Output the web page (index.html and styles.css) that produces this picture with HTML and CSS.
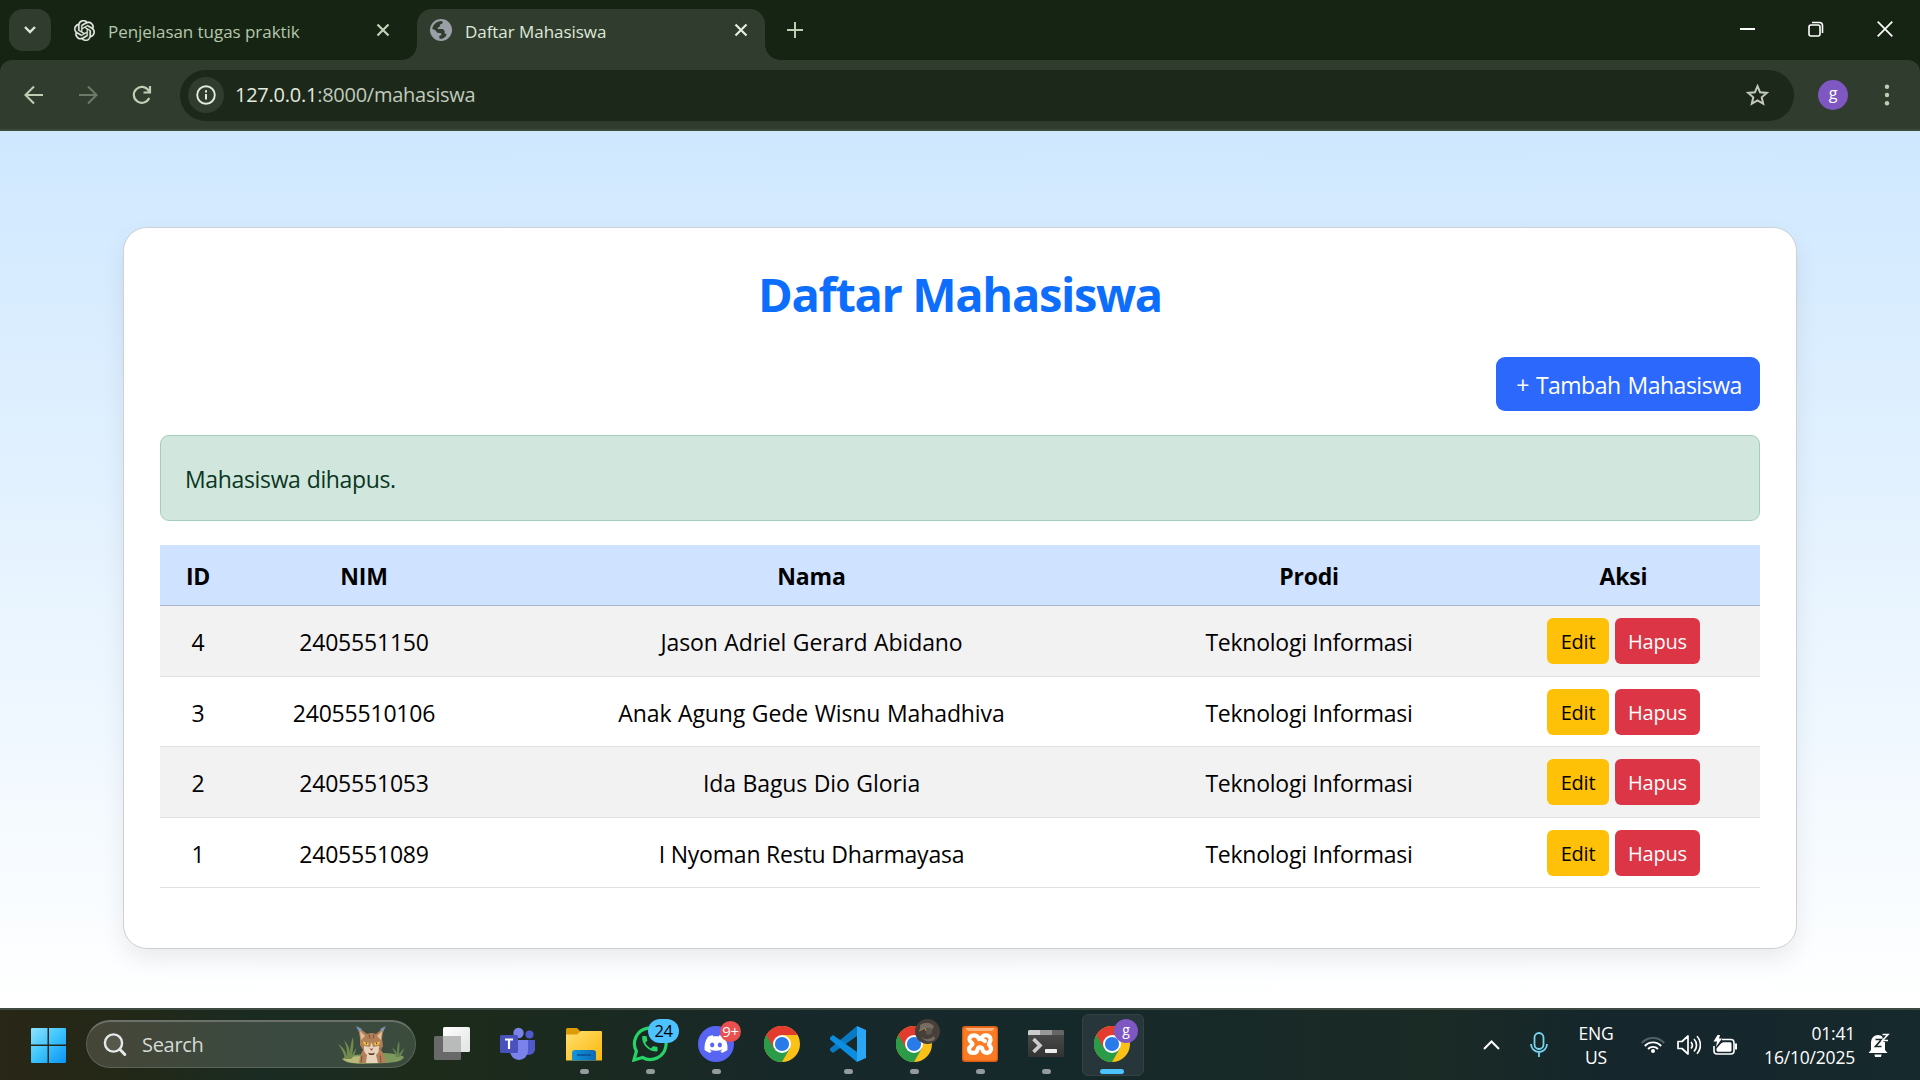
FILE: index.html
```html
<!DOCTYPE html>
<html lang="id">
<head>
<meta charset="utf-8">
<title>Daftar Mahasiswa</title>
<link rel="stylesheet" href="styles.css">
</head>
<body>
<svg class="defs" width="0" height="0" aria-hidden="true">
  <defs>
    <linearGradient id="win" x1="0" y1="0" x2="1" y2="1"><stop offset="0" stop-color="#8fe3ff"/><stop offset=".5" stop-color="#3cc3fc"/><stop offset="1" stop-color="#0a93f5"/></linearGradient>
    <linearGradient id="folder" x1="0" y1="0" x2="1" y2="1"><stop offset="0" stop-color="#ffe070"/><stop offset="1" stop-color="#fbb70a"/></linearGradient>
    <linearGradient id="blue" x1="0" y1="0" x2="1" y2="0"><stop offset="0" stop-color="#1296dd"/><stop offset="1" stop-color="#0d69b8"/></linearGradient>
    <linearGradient id="dark" x1="0" y1="0" x2="0" y2="1"><stop offset="0" stop-color="#4e4e4e"/><stop offset="1" stop-color="#333"/></linearGradient>
    <linearGradient id="light" x1="0" y1="0" x2="1" y2="1"><stop offset="0" stop-color="#fff"/><stop offset="1" stop-color="#e2e2e2"/></linearGradient>
    <symbol id="chrome" viewBox="0 0 36 36">
      <circle cx="18" cy="18" r="18" fill="#fbc116"/>
      <path d="M2.41 9A18 18 0 0 0 18 36l7.8-13.5L18 18z" fill="#2a9b48"/>
      <path d="M2.41 9A18 18 0 0 1 33.59 9H18l-7.8 13.5z" fill="#e33b2e"/>
      <circle cx="18" cy="18" r="9" fill="#fff"/>
      <circle cx="18" cy="18" r="7.1" fill="#2a7bea"/>
    </symbol>
  </defs>
</svg>

<header class="tabstrip">
  <button class="tab-search" aria-label="Search tabs"><svg width="14" height="10" viewBox="0 0 14 10"><path d="M2 2l5 5 5-5" fill="none" stroke="#dde8d5" stroke-width="2.4"/></svg></button>
  <div class="tab">
    <svg width="21" height="21" viewBox="0 0 24 24"><path fill="#e9eee6" stroke="#e9eee6" stroke-width=".4" d="M22.2819 9.8211a5.9847 5.9847 0 0 0-.5157-4.9108 6.0462 6.0462 0 0 0-6.5098-2.9A6.0651 6.0651 0 0 0 4.9807 4.1818a5.9847 5.9847 0 0 0-3.9977 2.9 6.0462 6.0462 0 0 0 .7427 7.0966 5.98 5.98 0 0 0 .511 4.9107 6.051 6.051 0 0 0 6.5146 2.9001A5.9847 5.9847 0 0 0 13.2599 24a6.0557 6.0557 0 0 0 5.7718-4.2058 5.9894 5.9894 0 0 0 3.9977-2.9001 6.0557 6.0557 0 0 0-.7475-7.0729zm-9.022 12.6081a4.4755 4.4755 0 0 1-2.8764-1.0408l.1419-.0804 4.7783-2.7582a.7948.7948 0 0 0 .3927-.6813v-6.7369l2.02 1.1686a.071.071 0 0 1 .038.052v5.5826a4.504 4.504 0 0 1-4.4945 4.4944zm-9.6607-4.1254a4.4708 4.4708 0 0 1-.5346-3.0137l.142.0852 4.783 2.7582a.7712.7712 0 0 0 .7806 0l5.8428-3.3685v2.3324a.0804.0804 0 0 1-.0332.0615L9.74 19.9502a4.4992 4.4992 0 0 1-6.1408-1.6464zM2.3408 7.8956a4.485 4.485 0 0 1 2.3655-1.9728V11.6a.7664.7664 0 0 0 .3879.6765l5.8144 3.3543-2.0201 1.1685a.0757.0757 0 0 1-.071 0l-4.8303-2.7865A4.504 4.504 0 0 1 2.3408 7.872zm16.5963 3.8558L13.1038 8.364 15.1192 7.2a.0757.0757 0 0 1 .071 0l4.8303 2.7913a4.4944 4.4944 0 0 1-.6765 8.1042v-5.6772a.79.79 0 0 0-.407-.667zm2.0107-3.0231l-.142-.0852-4.7735-2.7818a.7759.7759 0 0 0-.7854 0L9.409 9.2297V6.8974a.0662.0662 0 0 1 .0284-.0615l4.8303-2.7866a4.4992 4.4992 0 0 1 6.6802 4.66zM8.3065 12.863l-2.02-1.1638a.0804.0804 0 0 1-.038-.0567V6.0742a4.4992 4.4992 0 0 1 7.3757-3.4537l-.142.0805L8.704 5.459a.7948.7948 0 0 0-.3927.6813zm1.0976-2.3654l2.602-1.4998 2.6069 1.4998v2.9994l-2.5974 1.4997-2.6067-1.4997Z"/></svg>
    <span class="tab-title">Penjelasan tugas praktik</span>
    <svg class="tab-close" width="14" height="14" viewBox="0 0 14 14"><path d="M1.5 1.5l11 11m0-11l-11 11" stroke="#c3d3ba" stroke-width="2.2"/></svg>
  </div>
  <div class="tab tab-active">
    <svg width="22" height="22" viewBox="0 0 24 24"><circle cx="12" cy="12" r="12" fill="#9aa0a6"/><path fill="#303c2d" d="M2.5 11C3 6.500 7 2.600 12.500 2.300L14 3.300 13.500 5 11 6 11 8 8.500 9.500 8.500 11 14 11 16 13 16 16 18 16 17.500 18.500C15.500 21 13 21.600 10.500 21.500L10 18.500 12.500 17.500 12 15.500 8 15 5.500 12Z"/></svg>
    <span class="tab-title">Daftar Mahasiswa</span>
    <svg class="tab-close" width="14" height="14" viewBox="0 0 14 14"><path d="M1.500 1.500l11 11m0-11l-11 11" stroke="#e6eee1" stroke-width="2.200"/></svg>
  </div>
  <svg class="new-tab" width="16" height="16" viewBox="0 0 16 16"><path d="M8 0v16M0 8h16" stroke="#bccdb3" stroke-width="2"/></svg>
  <div class="window-controls">
    <svg width="15" height="16" viewBox="0 0 15 16"><path d="M0 8h15" stroke="#fff" stroke-width="2"/></svg>
    <svg width="16" height="16" viewBox="0 0 16 16" fill="none" stroke="#fff" stroke-width="1.600"><rect x="1" y="4" width="11" height="11" rx="2"/><path d="M4 1.500h7.500a3 3 0 0 1 3 3V12"/></svg>
    <svg width="16" height="16" viewBox="0 0 16 16"><path d="M.7.7l14.600 14.600m0-14.600L.7 15.300" stroke="#fff" stroke-width="1.700"/></svg>
  </div>
</header>

<nav class="toolbar">
  <svg width="20" height="20" viewBox="0 0 20 20" fill="none" stroke="#bdcfb3" stroke-width="2.100"><path d="M19 10H2.500M10 1.500L1.500 10l8.500 8.500"/></svg>
  <svg width="20" height="20" viewBox="0 0 20 20" fill="none" stroke="#6d7969" stroke-width="2.100"><path d="M1 10h16.500M10 1.500l8.500 8.500-8.500 8.500"/></svg>
  <svg width="20" height="20" viewBox="0 0 20 20" fill="none" stroke="#bdcfb3" stroke-width="2.200"><path d="M17.200 13A8 8 0 1 1 16.500 5.400L18 7.300M18 1v6.500h-6.500"/></svg>
  <div class="omnibox">
    <span class="site-info"><svg width="20" height="20" viewBox="0 0 20 20"><circle cx="10" cy="10" r="8.800" fill="none" stroke="#e2eadd" stroke-width="1.900"/><path d="M10 9v5.500M10 5.300v2.200" stroke="#e2eadd" stroke-width="2"/></svg></span>
    <span class="url"><b>127.0.0.1</b>:8000/mahasiswa</span>
    <svg class="star" width="23" height="22" viewBox="0 0 23 22"><path d="M11.500 2.200l2.600 6.100 6.700.6-5.100 4.400 1.500 6.500-5.700-3.400-5.700 3.400 1.500-6.500L2.200 8.900l6.700-.6z" fill="none" stroke="#c5cac0" stroke-width="2"/></svg>
  </div>
  <span class="profile">g</span>
  <svg class="menu" width="6" height="24" viewBox="0 0 6 24" fill="#bdcfb3"><circle cx="3" cy="3.700" r="2.200"/><circle cx="3" cy="12" r="2.200"/><circle cx="3" cy="20.200" r="2.200"/></svg>
</nav>

<main class="page">
  <section class="card">
    <h1 class="title">Daftar Mahasiswa</h1>
    <div class="actions"><a class="btn-add">+ Tambah Mahasiswa</a></div>
    <div class="alert">Mahasiswa dihapus.</div>
    <table class="students">
      <colgroup><col class="c-id"><col class="c-nim"><col class="c-nama"><col class="c-prodi"><col class="c-aksi"></colgroup>
      <thead><tr><th>ID</th><th>NIM</th><th>Nama</th><th>Prodi</th><th>Aksi</th></tr></thead>
      <tbody>
        <tr class="tall"><td>4</td><td>2405551150</td><td class="name">Jason Adriel Gerard Abidano</td><td class="prodi">Teknologi Informasi</td><td><div class="btns"><a class="btn edit">Edit</a><a class="btn del">Hapus</a></div></td></tr>
        <tr><td>3</td><td>24055510106</td><td class="name">Anak Agung Gede Wisnu Mahadhiva</td><td class="prodi">Teknologi Informasi</td><td><div class="btns"><a class="btn edit">Edit</a><a class="btn del">Hapus</a></div></td></tr>
        <tr class="tall"><td>2</td><td>2405551053</td><td class="name">Ida Bagus Dio Gloria</td><td class="prodi">Teknologi Informasi</td><td><div class="btns"><a class="btn edit">Edit</a><a class="btn del">Hapus</a></div></td></tr>
        <tr><td>1</td><td>2405551089</td><td>I Nyoman Restu Dharmayasa</td><td class="prodi">Teknologi Informasi</td><td><div class="btns"><a class="btn edit">Edit</a><a class="btn del">Hapus</a></div></td></tr>
      </tbody>
    </table>
  </section>
</main>

<footer class="taskbar">
  <svg class="start" width="35" height="35" viewBox="0 0 35 35" fill="url(#win)"><path d="M1 0h15.500v16.500H0V1a1 1 0 0 1 1-1zM18 0h16a1 1 0 0 1 1 1v15.500H18zM0 18h16.500v17H1a1 1 0 0 1-1-1zM18 18h17v16a1 1 0 0 1-1 1H18z"/></svg>
  <div class="search">
    <svg width="24" height="24" viewBox="0 0 24 24" fill="none" stroke="#e6e9ea" stroke-linecap="round"><circle cx="10.500" cy="10" r="8.600" stroke-width="2.400" fill="#ffffff18"/><path d="M17 16.500l4.800 5" stroke-width="3"/></svg>
    <span class="search-text">Search</span>
    <svg class="lynx" width="68" height="38" viewBox="0 0 68 38">
      <path d="M4 33c6-5 17-4 24-5 14-2 32-1 38 3-2 6-16 6-29 6.500C20 38 8 38 4 33z" fill="#7d9a5c"/>
      <path d="M5 33c7-3 20-4 27-1l-2 5C18 38 9 37 5 33z" fill="#b9b97c"/>
      <path d="M7 33C6 27 3 22 0 18c5 3 8 7 9 12 0-7-1-11-3-16 4 4 6 9 6 14 0-6 1-12 3-17 1 7 0 13-1 18l4-7c0 5-3 9-5 11z" fill="#718b4c"/>
      <path d="M58 31c-1-4-2-6-4-9 3 1 4 3 5 6 0-5 0-9 2-13 1 5 0 9 0 13l5-6c-1 5-3 8-5 9z" fill="#668453"/>
      <path d="M22 12L20 1l9 7q5-2 9 0l8-7-2 11 1 8-2 4q4 5 5 13H21q1-9 4-13l-3-5z" fill="#b28058"/>
      <path d="M18 0l6 3-3 3zm30 0l-6 3 3 3z" fill="#7b95b3"/>
      <path d="M22 5l5 5-4 4zM44 5l-5 5 4 4z" fill="#e3bd95"/>
      <path d="M26 20l6 1 1.500-5 1.500 5 6-1q1 6-3 9l2 8H28l1-8q-4-3-3-9z" fill="#e8d3bd"/>
      <path d="M25 15.500l6 1.500-1 2.500-4-1zm17 0l-6 1.500 1 2.500 4-1z" fill="#f4c344"/><path d="M27.500 16.500l1.500.3-.5 2zM39.500 16.500l-1.500.3.500 2z" fill="#362a20"/>
      <path d="M31.500 22.500h4l-2 2.500z" fill="#b0604e"/><path d="M30 26.500q3.500 2 7 0l-1.500 2.500h-4z" fill="#5a352a"/>
      <path d="M31 8.500l1 4m4-4l-1 4m-12 9l2 2m18-2l-2 2m-17 6l-1 7m19-7l1 7" stroke="#77533a" stroke-width="1"/>
    </svg>
  </div>
  <ul class="apps">
    <li class="app"><svg width="36" height="36" viewBox="0 0 36 36"><rect y="10" width="27" height="24" rx="1.500" fill="#686968"/><rect x="9" y="1" width="27" height="25" rx="1.500" fill="url(#light)"/><path d="M9 10h18v16H9z" fill="#b9baba"/></svg></li>
    <li class="app"><svg width="36" height="36" viewBox="0 0 36 36"><circle cx="29.500" cy="8.500" r="4" fill="#5059c9"/><path d="M26 14h9v10a6 6 0 0 1-9 4z" fill="#5059c9"/><circle cx="18.500" cy="7" r="5.200" fill="#7b83eb"/><path d="M10 14h18v11a9 9 0 0 1-18 0z" fill="#7b83eb"/><rect y="9" width="18" height="18" rx="1.500" fill="#4951bd"/><path d="M5 13.500h8M9 13.500V23" stroke="#fff" stroke-width="2.200"/></svg></li>
    <li class="app run"><svg width="36" height="36" viewBox="0 0 36 36"><path d="M0 3.500A1.500 1.500 0 0 1 1.500 2H11l4 4-4 4H0z" fill="#dd9b08"/><path d="M0 8.500h11L15 5h20a1 1 0 0 1 1 1v28.500H0z" fill="url(#folder)"/><path d="M6 34.500V27a3 3 0 0 1 3-3h18a3 3 0 0 1 3 3v7.500z" fill="url(#blue)"/><path d="M11 29h14" stroke="#0a4f8f" stroke-width="1.500"/></svg></li>
    <li class="app run"><svg width="36" height="36" viewBox="0 0 36 36"><path d="M2 34l2.400-8.700A15.800 15.800 0 1 1 10.500 31.500z" fill="none" stroke="#25d366" stroke-width="3.200"/><g transform="translate(7.500 7.500) scale(.86)"><path fill="#25d366" d="M6.620 10.790c1.440 2.830 3.760 5.140 6.590 6.590l2.200-2.200c.27-.27.67-.36 1.020-.24 1.120.37 2.330.57 3.570.57.55 0 1 .45 1 1V20c0 .55-.45 1-1 1-9.390 0-17-7.610-17-17 0-.55.450-1 1-1h3.500c.55 0 1 .45 1 1 0 1.250.2 2.450.57 3.570.11.35.03.74-.25 1.020z"/></g></svg><span class="badge wa">24</span></li>
    <li class="app run"><svg width="36" height="36" viewBox="0 0 36 36"><circle cx="18" cy="18" r="18" fill="#5865f2"/><g transform="translate(6.500 6.500) scale(.96)"><path fill="#fff" d="M20.317 4.3698a19.7913 19.7913 0 00-4.8851-1.5152.0741.0741 0 00-.0785.0371c-.211.3753-.4447.8648-.6083 1.2495-1.8447-.2762-3.68-.2762-5.4868 0-.1636-.3933-.4058-.8742-.6177-1.2495a.077.077 0 00-.0785-.037 19.7363 19.7363 0 00-4.8852 1.515.0699.0699 0 00-.0321.0277C.5334 9.0458-.319 13.5799.0992 18.0578a.0824.0824 0 00.0312.0561c2.0528 1.5076 4.0413 2.4228 5.9929 3.0294a.0777.0777 0 00.0842-.0276c.4616-.6304.8731-1.2952 1.226-1.9942a.076.076 0 00-.0416-.1057c-.6528-.2476-1.2743-.5495-1.8722-.8923a.077.077 0 01-.0076-.1277c.1258-.0943.2517-.1923.3718-.2914a.0743.0743 0 01.0776-.0105c3.9278 1.7933 8.18 1.7933 12.0614 0a.0739.0739 0 01.0785.0095c.1202.099.246.1981.3728.2924a.077.077 0 01-.0066.1276 12.2986 12.2986 0 01-1.873.8914.0766.0766 0 00-.0407.1067c.3604.698.7719 1.3628 1.225 1.9932a.076.076 0 00.0842.0286c1.961-.6067 3.9495-1.5219 6.0023-3.0294a.077.077 0 00.0313-.0552c.5004-5.177-.8382-9.6739-3.5485-13.6604a.061.061 0 00-.0312-.0286zM8.02 15.3312c-1.1825 0-2.1569-1.0857-2.1569-2.419 0-1.3332.9555-2.4189 2.157-2.4189 1.2108 0 2.1757 1.0952 2.1568 2.419 0 1.3332-.9555 2.4189-2.1569 2.4189zm7.9748 0c-1.1825 0-2.1569-1.0857-2.1569-2.419 0-1.3332.9554-2.4189 2.1569-2.4189 1.2108 0 2.1757 1.0952 2.1568 2.419 0 1.3332-.946 2.4189-2.1568 2.4189Z"/></g></svg><span class="badge dc">9+</span></li>
    <li class="app"><svg width="36" height="36"><use href="#chrome"/></svg></li>
    <li class="app run"><svg width="36" height="36" viewBox="0 0 36 36"><path d="M27 0L0 22.500v2L3 27 27 10z" fill="#0b78c2"/><path d="M3 9L0 11.500v2L27 36V26z" fill="#0c8de0"/><path d="M27 0l9 4v28l-9 4z" fill="#2aa6f5"/></svg></li>
    <li class="app run"><svg width="36" height="36"><use href="#chrome"/></svg><span class="badge photo"><svg width="25" height="25" viewBox="0 0 25 25"><circle cx="12.500" cy="12.500" r="12.500" fill="#463f3a"/><path d="M5 6q8-5 14 1l-2 4q-6-4-12 0zM6 18q7 5 13-1l1 3q-7 6-14-2z" fill="#766c62"/><path d="M11 9q7-1 6 5-3 3-6 1z" fill="#5e554d"/><path d="M4 12l6-3 1 3" fill="none" stroke="#b08a5c"/></svg></span></li>
    <li class="app run"><svg width="36" height="36" viewBox="0 0 36 36"><rect width="36" height="36" rx="3" fill="#d85f14"/><rect x="1.200" y="1.500" width="33.600" height="33" rx="2.500" fill="#fb7a24"/><path d="M4 2h28q0 3-4 3H8Q4 5 4 2z" fill="#fdb37e"/><path d="M17 13C16 8 7 8 7.500 13.500C8 17 10.500 16 10.500 18C10.500 20 7 20 7 23.500C7.500 28 15 28 15.500 23.500C16 20.500 20 20.500 20.500 23.500C21 28 29 28 29 23C29 20 27 19.500 27 18C27 16.500 29 16 28.500 13C28 8 19.500 8 19.500 13L23 15" fill="none" stroke="#fff" stroke-width="4.200" stroke-linejoin="round" stroke-linecap="round"/></svg></li>
    <li class="app run"><svg width="36" height="36" viewBox="0 0 36 36"><rect y="4" width="36" height="27" rx="1.500" fill="url(#dark)"/><path d="M0 9V5.500A1.500 1.500 0 0 1 1.500 4H12v5z" fill="#ccc"/><path d="M12 4h12v5H12z" fill="#999"/><path d="M24 4h10.500A1.500 1.500 0 0 1 36 5.500V9H24z" fill="#666"/><path d="M5.500 13l6.500 6.500-6.500 6.500" fill="none" stroke="#ccc" stroke-width="3.600"/><rect x="17" y="23" width="12" height="4" rx=".8" fill="#eee"/></svg></li>
    <li class="app run current"><svg width="36" height="36"><use href="#chrome"/></svg><span class="badge user">g</span></li>
  </ul>
  <div class="tray">
    <svg class="up" width="17" height="10" viewBox="0 0 17 10"><path d="M1 9l7.500-7.500L16 9" fill="none" stroke="#fff" stroke-width="2"/></svg>
    <svg class="mic" width="18" height="25" viewBox="0 0 18 25" fill="none" stroke="#76d5f2" stroke-width="1.800"><rect x="4.500" y="1" width="9" height="16" rx="4.500"/><path d="M1 12a8 8 0 0 0 16 0M9 20v5"/></svg>
    <div class="lang"><span>ENG</span><span>US</span></div>
    <svg class="wifi" width="24" height="18" viewBox="0 0 24 18" fill="none" stroke="#fff" stroke-width="1.900"><path d="M.8 7a15 15 0 0 1 22.400 0" stroke="#536165"/><path d="M3.800 10a11 11 0 0 1 16.400 0M7 13a7 7 0 0 1 10 0"/><circle cx="12" cy="15" r="2" fill="#fff" stroke="none"/></svg>
    <svg class="vol" width="24" height="20" viewBox="0 0 24 20" fill="none" stroke="#fff" stroke-width="1.700"><path d="M1 6.500h4L11 1v18l-6-5.500H1z" stroke-linejoin="round"/><path d="M14 7a5 5 0 0 1 0 6.500M17 4a9 9 0 0 1 0 12.500M20 1.300a13 13 0 0 1 0 17.500"/></svg>
    <svg class="bat" width="24" height="20" viewBox="0 0 24 20"><path d="M9 4.500h9a3 3 0 0 1 3 3V16a3 3 0 0 1-3 3H4a3 3 0 0 1-3-3v-5" fill="none" stroke="#fff" stroke-width="1.600"/><path d="M10 7.200h7.500l1 1v7.600l-1 1H4.500l-1-1v-2.300L8 8.500zM22 8.500H24v6h-2zM4.500 0H7L6 3.500h3L3 12l1-5.500H.5z" fill="#fff"/></svg>
    <div class="clock"><span>01:41</span><span>16/10/2025</span></div>
    <svg class="bell" width="22" height="24" viewBox="0 0 22 24"><path d="M3 17V9a7 7 0 0 1 14 0v8l2.500 3H.5zM6.500 21.500h7a3.500 3.500 0 0 1-7 0z" fill="#fff"/><path d="M7.500 6.500h6l-6 7h6" fill="none" stroke="#16282b" stroke-width="1.700"/><path d="M13.500 0H22v9h-6.500z" fill="#16282b"/><path d="M14.500 1.500h5.500l-5.500 6h5.500" fill="none" stroke="#fff" stroke-width="1.600"/></svg>
  </div>
</footer>
</body>
</html>
```

FILE: styles.css
```css
* { box-sizing: border-box; }

body {
  margin: 0;
  width: 1920px;
  height: 1080px;
  overflow: hidden;
  display: flex;
  flex-direction: column;
  font-family: "Open Sans", "Noto Sans", sans-serif;
  background: #162413;
}

svg { display: block; flex: none; }
.defs { position: absolute; }

/* Tab strip */
.tabstrip {
  height: 60px;
  flex: none;
  display: flex;
  align-items: flex-start;
  padding: 9px 27px 0 9px;
}
.tab-search {
  width: 42px;
  height: 42px;
  padding: 0;
  border: 0;
  border-radius: 14px;
  background: #303c2d;
  display: flex;
  align-items: center;
  justify-content: center;
}
.tab {
  display: flex;
  align-items: center;
  height: 51px;
  width: 342px;
  margin-left: 9px;
  padding: 0 12px 9px 14px;
  color: #b5c6ac;
}
.tab-title {
  flex: 1;
  margin-left: 13px;
  padding-top: 3px;
  font-size: 17px;
  line-height: 24px;
  letter-spacing: -0.05px;
  white-space: nowrap;
}
.tab-active {
  position: relative;
  width: 348px;
  margin-left: 15px;
  padding: 0 17px 9px 13px;
  border-radius: 15px 15px 0 0;
  background: #303c2d;
  color: #dfe9d9;
}
.tab-active::before,
.tab-active::after {
  content: "";
  position: absolute;
  bottom: 0;
  width: 15px;
  height: 15px;
}
.tab-active::before { left: -15px; background: radial-gradient(circle at 0 0, transparent 14.5px, #303c2d 15px); }
.tab-active::after { right: -15px; background: radial-gradient(circle at 100% 0, transparent 14.5px, #303c2d 15px); }
.new-tab { margin: 13px 0 0 22px; }
.window-controls {
  margin: 12px 0 0 auto;
  display: flex;
  gap: 53px;
}

/* Toolbar */
.toolbar {
  height: 71px;
  flex: none;
  display: flex;
  align-items: center;
  padding: 1px 29px 0 24px;
  gap: 34px;
  background: #303c2d;
  border-bottom: 2px solid #3c4939;
  border-radius: 12px 12px 0 0;
}
.omnibox {
  display: flex;
  align-items: center;
  width: 1614px;
  height: 51px;
  margin-left: -6px;
  padding: 0 25px 0 8px;
  border-radius: 26px;
  background: #1c281a;
}
.site-info {
  width: 36px;
  height: 36px;
  border-radius: 50%;
  background: #303c2d;
  display: flex;
  align-items: center;
  justify-content: center;
}
.url {
  flex: 1;
  margin-left: 11px;
  font-size: 20px;
  line-height: 28px;
  letter-spacing: -0.25px;
  color: #c2cabd;
}
.url b { font-weight: 400; color: #e4eade; }
.profile {
  width: 30px;
  height: 30px;
  margin-left: -10px;
  border-radius: 50%;
  background: #7e57c2;
  color: #fff;
  font-size: 16px;
  line-height: 27px;
  text-align: center;
}
.menu { margin-left: 2px; }

/* Page */
.page {
  height: 877px;
  flex: none;
  padding: 96px 123px 0;
  background: linear-gradient(180deg, #cfe8ff 0%, #ffffff 100%);
}
.card {
  height: 722px;
  padding: 36px 36px 0;
  border: 1px solid #cdd1d4;
  border-radius: 24px;
  background: #fff;
  box-shadow: 0 10px 24px rgba(0, 0, 0, 0.08);
}
.title {
  margin: 0;
  height: 93px;
  font-size: 47px;
  line-height: 60px;
  letter-spacing: -1.35px;
  text-align: center;
  color: #0d6efd;
}
.actions {
  display: flex;
  justify-content: flex-end;
}
.btn-add {
  width: 264px;
  height: 54px;
  padding-left: 2px;
  border-radius: 9px;
  background: #2b68fb;
  color: #fff;
  font-size: 23px;
  line-height: 57px;
  letter-spacing: -0.5px;
  word-spacing: 1.5px;
  text-align: center;
}
.alert {
  height: 86px;
  margin: 24px 0;
  padding: 0 24px;
  border: 1px solid #a3cfbb;
  border-radius: 9px;
  background: #d1e7dd;
  color: #0a3622;
  font-size: 23px;
  line-height: 87px;
  letter-spacing: -0.35px;
  word-spacing: 0.5px;
}

.students {
  width: 100%;
  table-layout: fixed;
  border-collapse: separate;
  border-spacing: 0;
  font-size: 23px;
  line-height: 34px;
  letter-spacing: -0.2px;
  text-align: center;
  color: #000;
}
.c-id { width: 76px; }
.c-nim { width: 256px; }
.c-nama { width: 639px; }
.c-prodi { width: 356px; }
.c-aksi { width: 273px; }
.students th {
  height: 61px;
  padding: 2px 0 0;
  background: #cfe2ff;
  border-bottom: 1px solid #a6b5cc;
}
.students td {
  height: 70px;
  padding: 3px 0 0;
  border-bottom: 1px solid #dee2e6;
}
.students .tall td { height: 71px; padding-top: 1px; background: #f2f2f2; }
.students .name { letter-spacing: -0.1px; word-spacing: 0.7px; }
.students .prodi { letter-spacing: -0.25px; }
.students td:last-child { padding: 0; }
.btns { display: flex; justify-content: center; gap: 6px; }
.btn {
  height: 46px;
  border-radius: 6px;
  font-size: 20px;
  line-height: 47px;
  letter-spacing: -0.2px;
}
.edit { width: 62px; background: #ffc107; color: #000; }
.del { width: 85px; background: #dc3545; color: #fff; }

/* Taskbar */
.taskbar {
  height: 72px;
  flex: none;
  display: flex;
  align-items: center;
  padding: 0 30px 1px 31px;
  border-top: 2px solid #3e4a42;
  background: linear-gradient(90deg, #292717 0%, #222817 7%, #1a2b23 14%, #1d2b1a 22%, #1b2a20 30%, #17282a 42%, #16292a 55%, #1a2a25 75%, #15262c 84%, #16292c 100%);
  color: #fff;
}
.start { margin-top: 1px; }
.search {
  display: flex;
  align-items: center;
  width: 330px;
  height: 48px;
  margin: -1px 0 0 20px;
  padding: 0 9px 0 16px;
  border: 1px solid #5a6358;
  border-top: 2px solid #6b716a;
  border-radius: 24px;
  background: linear-gradient(90deg, #464637, #3a4a41 60%, #3b4b3c);
}
.search-text {
  flex: 1;
  margin-left: 15px;
  font-size: 20px;
  line-height: 28px;
  letter-spacing: -0.3px;
  color: #d5dad5;
}
.apps {
  display: flex;
  list-style: none;
  margin: 1px 0 0 3px;
  padding: 0;
}
.app {
  position: relative;
  width: 66px;
  height: 70px;
  padding: 16px 15px 0;
}
.run::after {
  content: "";
  position: absolute;
  left: 29px;
  bottom: 6px;
  width: 9px;
  height: 5px;
  border-radius: 3px;
  background: #949b9c;
}
.current::before {
  content: "";
  position: absolute;
  left: 3px;
  top: 4px;
  width: 60px;
  height: 60px;
  border: 1px solid #344245;
  border-radius: 6px;
  background: #26363a;
}
.current svg { position: relative; }
.current::after { left: 21px; width: 24px; background: #4cc2ff; }
.badge {
  position: absolute;
  border-radius: 13px;
  text-align: center;
}
.wa { left: 31px; top: 9px; width: 31px; height: 24px; background: #4cc2ff; color: #000; font-size: 16.5px; line-height: 24px; letter-spacing: -0.4px; }
.dc { left: 37px; top: 11px; width: 21px; height: 21px; background: #e9504f; color: #fff; font-size: 15px; line-height: 20px; letter-spacing: -0.3px; }
.photo { left: 34px; top: 9px; }
.user { left: 35px; top: 9px; width: 24px; height: 24px; background: #7e57c2; color: #fff; font-size: 14px; line-height: 21px; }

.tray {
  display: flex;
  align-items: center;
  margin-left: auto;
}
.mic { margin-left: 30px; }
.lang, .clock {
  display: flex;
  flex-direction: column;
  font-size: 17.5px;
  line-height: 24px;
  letter-spacing: -0.2px;
}
.lang { width: 48px; margin-left: 24px; align-items: center; }
.wifi { margin-left: 21px; }
.vol { margin-left: 12px; }
.bat { margin-left: 12px; }
.clock { width: 111px; margin-left: 7px; align-items: flex-end; }
.bell { margin-left: 13px; }
```
